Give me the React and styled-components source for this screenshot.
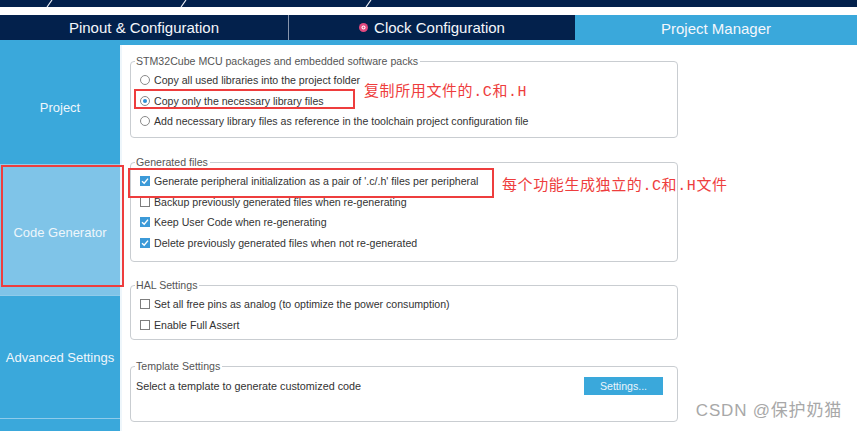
import React from "react";
import styled, { createGlobalStyle } from "styled-components";

const Global = createGlobalStyle`
  html, body { margin: 0; padding: 0; background: #fff; overflow: hidden; }
  * { box-sizing: border-box; }
`;

const NAVY = "#03214c";
const BLUE = "#3aa8db";
const LIGHT = "#7fc4e8";
const RED = "#ee3d3d";

const Page = styled.div`
  position: relative;
  width: 857px;
  height: 431px;
  display: flex;
  flex-direction: column;
  font-family: "Liberation Sans", Arial, sans-serif;
  background: #fff;
  overflow: hidden;
`;

const TopBar = styled.div`
  height: 7px;
  background: ${NAVY};
  flex: none;
  svg { display: block; }
`;

const Spacer = styled.div`
  height: 8px;
  flex: none;
`;

const Tabs = styled.div`
  display: flex;
  height: 25px;
  flex: none;
  background: ${NAVY};
`;

const Tab = styled.div`
  width: ${(p) => p.$w}px;
  display: flex;
  align-items: center;
  justify-content: center;
  gap: 6px;
  font-size: 15px;
  color: #f4f7fb;
  background: ${(p) => (p.$active ? BLUE : NAVY)};
  border-right: ${(p) => (p.$sep ? "1px solid #8795ad" : "none")};
  padding-top: ${(p) => (p.$active ? "2px" : "0")};
`;

const TabLine = styled.div`
  height: 5px;
  background: ${BLUE};
  flex: none;
`;

const Body = styled.div`
  flex: 1;
  display: flex;
  min-height: 0;
`;

const Sidebar = styled.div`
  width: 120px;
  flex: none;
  display: flex;
  flex-direction: column;
  gap: 1px;
  background: #8fcbea;
`;

const SideItem = styled.div`
  height: ${(p) => p.$h}px;
  flex: none;
  display: flex;
  align-items: center;
  justify-content: center;
  padding-top: ${(p) => p.$pt || 0}px;
  font-size: 13px;
  color: #eef6fb;
  background: ${(p) => (p.$active ? LIGHT : BLUE)};
  white-space: nowrap;
`;

const Content = styled.div`
  flex: 1;
  display: flex;
  flex-direction: column;
  padding: 10px 0 0 10px;
  border-left: 2px solid #eef6fb;
`;

const Group = styled.fieldset`
  width: 548px;
  height: ${(p) => p.$h}px;
  margin: ${(p) => p.$mt}px 0 0 -2px;
  padding: 2px 8px 0 9px;
  border: 1px solid #c9cdd1;
  border-radius: 4px;
  min-width: 0;
  flex: none;
`;

const Legend = styled.legend`
  font-size: 10.6px;
  line-height: 13px;
  color: #555;
  padding: 0 2px 0 1px;
  margin-left: -5px;
`;

const Row = styled.div`
  height: 20.5px;
  display: flex;
  align-items: center;
  gap: 4px;
  font-size: 10.6px;
  color: #333;
  white-space: nowrap;
`;

const Radio = styled.span`
  width: 10px;
  height: 10px;
  border-radius: 50%;
  border: 1px solid #8a8a8a;
  background: #fff;
  flex: none;
  display: flex;
  align-items: center;
  justify-content: center;
  &::after {
    content: "";
    width: 4px;
    height: 4px;
    border-radius: 50%;
    background: ${(p) => (p.$on ? "#2d8fd5" : "transparent")};
  }
`;

const Box = styled.span`
  width: 10px;
  height: 10px;
  flex: none;
  border: 1px solid ${(p) => (p.$on ? "#3c9ad8" : "#7d7d7d")};
  background: ${(p) => (p.$on ? "#3c9ad8" : "#fff")};
  display: flex;
  align-items: center;
  justify-content: center;
  svg { display: block; }
`;

const TemplateRow = styled.div`
  display: flex;
  align-items: center;
  justify-content: space-between;
  height: 20px;
  margin-top: 1px;
  font-size: 10.8px;
  color: #333;
  margin-left: -4px;
  padding-right: 6px;
`;

const Button = styled.div`
  width: 79px;
  height: 18px;
  background: ${BLUE};
  color: #eaf5fb;
  font-size: 10.6px;
  display: flex;
  align-items: center;
  justify-content: center;
`;

const Frame = styled.div`
  position: absolute;
  border: 2px solid ${RED};
  pointer-events: none;
`;

const Note = styled.div`
  position: absolute;
  font-family: "Liberation Mono", "Noto Sans CJK SC", monospace;
  font-size: 15px;
  line-height: 18px;
  letter-spacing: 0.6px;
  color: ${RED};
  white-space: nowrap;
`;

const Watermark = styled.div`
  position: absolute;
  right: 15px;
  bottom: 10px;
  font-family: "Liberation Sans", "Noto Sans CJK SC", sans-serif;
  font-size: 17px;
  letter-spacing: 0.8px;
  color: #a8a8a8;
  white-space: nowrap;
`;

const Check = () => (
  <svg width="8" height="8" viewBox="0 0 8 8">
    <path d="M1 4.2 L3.2 6.3 L7 1.6" fill="none" stroke="#fff" strokeWidth="1.4" />
  </svg>
);

const ClockIcon = () => (
  <svg width="9" height="9" viewBox="0 0 9 9">
    <circle cx="4.5" cy="4.5" r="4.5" fill="#e2497f" />
    <circle cx="4.5" cy="4.5" r="2" fill="#fff" />
    <circle cx="4.5" cy="4.5" r="1" fill="#e2497f" />
  </svg>
);

const RadioRow = ({ on, children }) => (
  <Row>
    <Radio $on={on} />
    {children}
  </Row>
);

const CheckRow = ({ on, children }) => (
  <Row>
    <Box $on={on}>{on && <Check />}</Box>
    {children}
  </Row>
);

export default function App() {
  return (
    <Page>
      <Global />
      <TopBar>
        <svg width="857" height="7" viewBox="0 0 857 7">
          <path d="M47 7 L52 0 M181 7 L186 0 M366 7 L371 0" stroke="#e8ecf2" strokeWidth="1.2" />
        </svg>
      </TopBar>
      <Spacer />
      <Tabs>
        <Tab $w={289} $sep>Pinout &amp; Configuration</Tab>
        <Tab $w={286}>
          <ClockIcon />
          Clock Configuration
        </Tab>
        <Tab $w={282} $active>Project Manager</Tab>
      </Tabs>
      <TabLine />
      <Body>
        <Sidebar>
          <SideItem $h={119} $pt={5}>Project</SideItem>
          <SideItem $h={130} $pt={4} $active>Code Generator</SideItem>
          <SideItem $h={122}>Advanced Settings</SideItem>
          <SideItem $h={20} />
        </Sidebar>
        <Content>
          <Group $h={83} $mt={0}>
            <Legend>STM32Cube MCU packages and embedded software packs</Legend>
            <RadioRow>Copy all used libraries into the project folder</RadioRow>
            <RadioRow on>Copy only the necessary library files</RadioRow>
            <RadioRow>Add necessary library files as reference in the toolchain project configuration file</RadioRow>
          </Group>
          <Group $h={106} $mt={18}>
            <Legend>Generated files</Legend>
            <CheckRow on>Generate peripheral initialization as a pair of '.c/.h' files per peripheral</CheckRow>
            <CheckRow>Backup previously generated files when re-generating</CheckRow>
            <CheckRow on>Keep User Code when re-generating</CheckRow>
            <CheckRow on>Delete previously generated files when not re-generated</CheckRow>
          </Group>
          <Group $h={61} $mt={17}>
            <Legend>HAL Settings</Legend>
            <CheckRow>Set all free pins as analog (to optimize the power consumption)</CheckRow>
            <CheckRow>Enable Full Assert</CheckRow>
          </Group>
          <Group $h={62} $mt={20}>
            <Legend>Template Settings</Legend>
            <TemplateRow>
              Select a template to generate customized code
              <Button>Settings...</Button>
            </TemplateRow>
          </Group>
        </Content>
      </Body>

      <Frame style={{ left: 1, top: 165, width: 123, height: 122 }} />
      <Frame style={{ left: 134, top: 89, width: 221, height: 20 }} />
      <Frame style={{ left: 128, top: 168, width: 366, height: 30 }} />
      <Note style={{ left: 364, top: 84 }}>复制所用文件的.C和.H</Note>
      <Note style={{ left: 502, top: 178 }}>每个功能生成独立的.C和.H文件</Note>
      <Watermark>CSDN @保护奶猫</Watermark>
    </Page>
  );
}
